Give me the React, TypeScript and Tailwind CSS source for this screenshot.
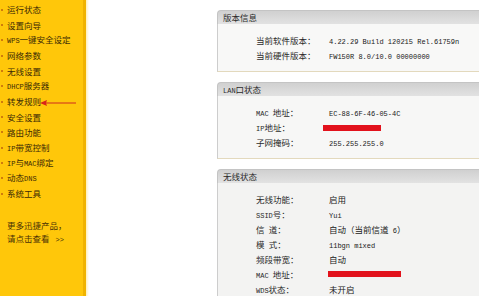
import React from "react";

const menuItems = [
  "运行状态",
  "设置向导",
  "WPS一键安全设定",
  "网络参数",
  "无线设置",
  "DHCP服务器",
  "转发规则",
  "安全设置",
  "路由功能",
  "IP带宽控制",
  "IP与MAC绑定",
  "动态DNS",
  "系统工具",
];

type Row = { label: string; value?: string; redact?: "ip" | "mac" };

const panels: { title: string; body: string; rows: Row[] }[] = [
  {
    title: "版本信息",
    body: "bg-[#f8f8f7]",
    rows: [
      { label: "当前软件版本：", value: "4.22.29 Build 120215 Rel.61759n" },
      { label: "当前硬件版本：", value: "FW150R 8.0/10.0 00000000" },
    ],
  },
  {
    title: "LAN口状态",
    body: "bg-[#f7f7f6]",
    rows: [
      { label: "MAC 地址：", value: "EC-88-6F-46-05-4C" },
      { label: "IP地址：", redact: "ip" },
      { label: "子网掩码：", value: "255.255.255.0" },
    ],
  },
  {
    title: "无线状态",
    body: "bg-[#f3f3f2]",
    rows: [
      { label: "无线功能：", value: "启用" },
      { label: "SSID号：", value: "Yui" },
      { label: "信 道：", value: "自动（当前信道 6）" },
      { label: "模 式：", value: "11bgn mixed" },
      { label: "频段带宽：", value: "自动" },
      { label: "MAC 地址：", redact: "mac" },
      { label: "WDS状态：", value: "未开启" },
    ],
  },
];

// ASCII runs get the narrow half-width mono face, like SimSun's latin glyphs
function Mixed({ text }: { text: string }) {
  const parts = text.split(/([\x00-\x7F]+)/).filter(Boolean);
  return (
    <span>
      {parts.map((p, i) =>
        /^[\x00-\x7F]+$/.test(p) ? (
          <span
            key={i}
            className="whitespace-pre font-['Liberation_Mono',monospace] text-[7px]"
          >
            {p}
          </span>
        ) : (
          <span key={i}>{p}</span>
        )
      )}
    </span>
  );
}

function Panel({ title, body, rows }: { title: string; body: string; rows: Row[] }) {
  return (
    <section className="w-[300px]">
      <div className="flex h-[14px] items-center rounded-tl-[4px] border-l border-t border-[#c4c4c4] bg-gradient-to-b from-[#d0d0d0] to-[#e2e2e2] pl-[5px] text-[8.5px] leading-none text-[#2a2a2a]">
        <Mixed text={title} />
      </div>
      <div
        className={`border-b border-l border-b-[#e3d9bd] border-l-[#cdcdcd] pb-[8px] pt-[9px] ${body}`}
      >
        {rows.map((r) => (
          <div key={r.label} className="flex h-[15px] items-center text-[8.5px] leading-none text-[#2a2a2a]">
            <div className="w-[111px] shrink-0 pl-[38px]">
              <Mixed text={r.label} />
            </div>
            {r.value && (
              <div className="text-[#202020]">
                <Mixed text={r.value} />
              </div>
            )}
            {r.redact === "ip" && (
              <div className="-ml-[6px] h-[6px] w-[58px] bg-[#e2121c]" />
            )}
            {r.redact === "mac" && (
              <div className="-ml-px -mt-[2px] h-[6px] w-[73px] bg-[#e2121c]" />
            )}
          </div>
        ))}
      </div>
    </section>
  );
}

export default function App() {
  return (
    <div className="relative flex h-[296px] w-[479px] overflow-hidden bg-white font-['Noto_Sans_CJK_SC','Noto_Sans',sans-serif]">
      {/* Sidebar */}
      <aside className="flex w-[86px] shrink-0 border-r-[3px] border-[#f0b300] bg-[#ffc70a] pt-[2px]">
        <div className="flex flex-col">
          {menuItems.map((m) => (
            <div key={m} className="flex h-[15.33px] items-center text-[8.5px] leading-none text-[#3b2a05]">
              <span className="ml-[1px] mr-[4px] h-[2px] w-[2px] rounded-full bg-[#c0620c]" />
              <span className="whitespace-nowrap">
                <Mixed text={m} />
              </span>
            </div>
          ))}
          <div className="mt-[18px] pl-[7px] text-[8.5px] leading-[13px] text-[#4a3206]">
            <div>更多迅捷产品，</div>
            <div>
              请点击查看 <Mixed text=" >>" />
            </div>
          </div>
        </div>
      </aside>
      <div className="w-[3px] shrink-0 bg-gradient-to-r from-[#fff0b8] to-white" />

      {/* Main */}
      <main className="flex flex-1 flex-col gap-[10px] pl-[128px] pt-[10px]">
        {panels.map((p) => (
          <Panel key={p.title} {...p} />
        ))}
      </main>

      {/* annotation arrow */}
      <svg className="absolute left-[39px] top-[99px]" width="40" height="8" viewBox="0 0 40 8">
        <path d="M6 4 H37" stroke="#cf2a1e" strokeWidth="1" />
        <path d="M1 4 L8 1 L7 4 L8 7 Z" fill="#d8251a" />
      </svg>
    </div>
  );
}
